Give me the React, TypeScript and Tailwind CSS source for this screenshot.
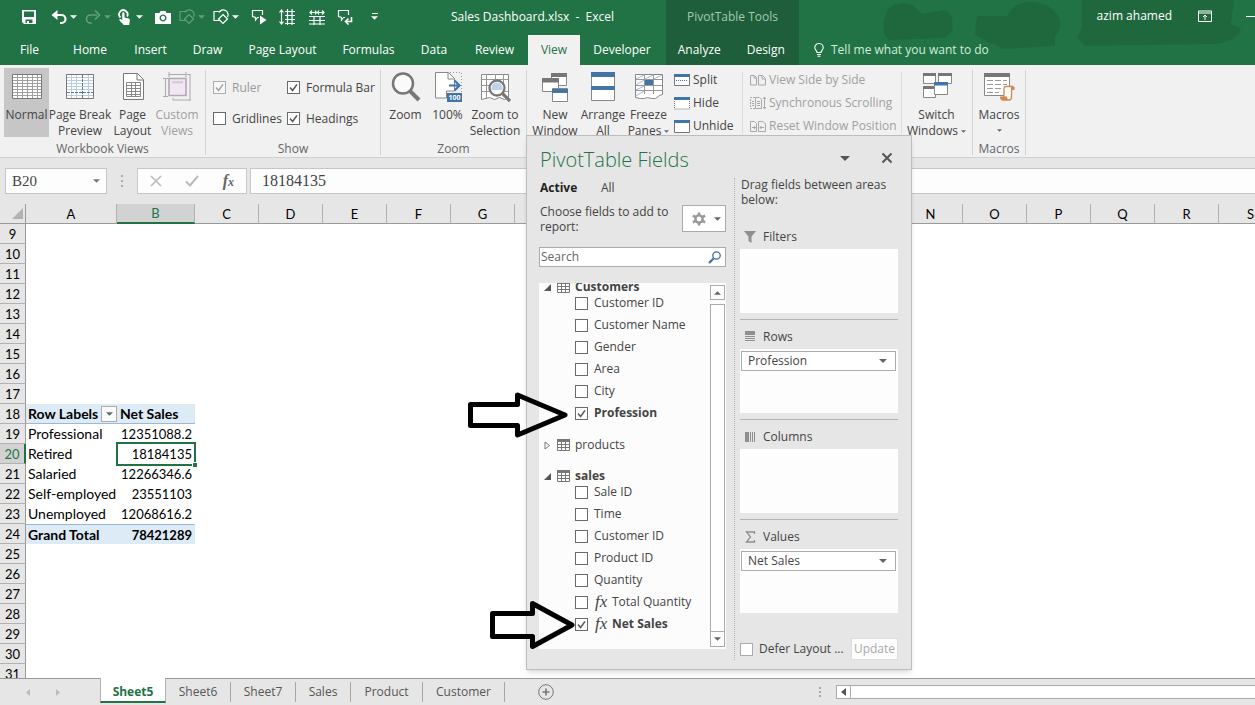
import { useState } from "react";
import type { ReactNode } from "react";
import clsx from "clsx";

/* ---------- shared pieces ---------- */

function Caret({ className }: { className?: string }) {
  return (
    <svg viewBox="0 0 8 4" className={clsx("h-1 w-2 shrink-0", className)} fill="currentColor" aria-hidden="true">
      <path d="M0 0h8L4 4z" />
    </svg>
  );
}

function CheckBox({
  id,
  label,
  defaultChecked,
  disabled,
  fx,
  boldWhenChecked,
  tone = "border-[#6a6a6a]",
}: {
  id: string;
  label: string;
  defaultChecked?: boolean;
  disabled?: boolean;
  fx?: boolean;
  boldWhenChecked?: boolean;
  tone?: string;
}) {
  const [on, setOn] = useState(!!defaultChecked);
  return (
    <div className={clsx("flex items-center", disabled && "opacity-50")}>
      <span className="grid h-[13px] w-[13px] shrink-0">
        <input
          id={id}
          type="checkbox"
          checked={on}
          disabled={disabled}
          onChange={() => setOn(!on)}
          className={clsx("col-start-1 row-start-1 h-[13px] w-[13px] appearance-none border bg-white", tone)}
        />
        {on && (
          <svg viewBox="0 0 13 13" className="pointer-events-none col-start-1 row-start-1 h-[13px] w-[13px]" aria-hidden="true">
            <path d="M3 6.5l2.6 3L10 3.4" fill="none" stroke="#5a5a5a" strokeWidth="1.6" />
          </svg>
        )}
      </span>
      {fx && <span className="ml-[7px] w-[11px] font-['Liberation_Serif',serif] text-[17px] leading-4 italic">fx</span>}
      <label htmlFor={id} className={clsx("ml-1.5 whitespace-nowrap", boldWhenChecked && on && "font-bold")}>
        {label}
      </label>
    </div>
  );
}

/* ---------- quick access icons ---------- */

const line = { fill: "none", stroke: "currentColor", strokeWidth: 1.2 };

const SaveIcon = (
  <path fillRule="evenodd" fill="currentColor" d="M1 1h14v14H3l-2-2zM3 2.5V8h10V2.5zM4.5 10.500V14H6v-2h2v2h3.500v-3.500z" />
);
const UndoIcon = (
  <g>
    <path d="M4 6h6.500a4 4 0 0 1 0 8H9" fill="none" stroke="currentColor" strokeWidth="2.200" />
    <path d="M0.500 6L6.500 1v10z" fill="currentColor" />
  </g>
);
const RedoIcon = (
  <g>
    <path d="M12 6H5.500a4 4 0 0 0 0 8H7" fill="none" stroke="currentColor" strokeWidth="1.600" />
    <path d="M10 1.500L14.500 6 10 10.500" fill="none" stroke="currentColor" strokeWidth="1.600" />
  </g>
);
const TouchIcon = (
  <g>
    <path d="M3.500 8.500a4.200 4.200 0 1 1 6.500-1" fill="none" stroke="currentColor" strokeWidth="1.800" />
    <path d="M5.200 4.500c0-1.600 2.300-1.600 2.300 0v4l3.800.9c1.200.3 1.700 1 1.500 2.100L12.200 16H6.800L2.500 11.500c-.6-1 .6-1.800 1.500-1.200l1.200.8z" fill="currentColor" />
  </g>
);
const CameraIcon = (
  <path fillRule="evenodd" fill="currentColor" d="M0 4h4.500L5.500 2h5l1 2H16v11H0zM8 5.500a3.500 3.500 0 1 0 .01 0zM8 6.800a2.200 2.200 0 1 1-.01 0z" />
);
const ShapesIcon = (
  <g {...line}>
    <path d="M7 11.500H1v-9h7M6 3.500a4.500 4.500 0 0 1 8.500 4.500" />
    <path d="M10 5.500l4.500 4.500-4.500 4.500L5.500 10z" />
  </g>
);
const CommentPlayIcon = (
  <g>
    <path {...line} d="M8 8.500H6.500L4.500 11V8.500L1.500 7.500v-6h10V6" />
    <path d="M9 6.500l6.500 4.500L9 15.500z" fill="currentColor" />
  </g>
);
const RowHeightIcon = (
  <g {...line}>
    <path d="M2.500 1v14M.5 3.500l2-2.500 2 2.500M.5 12.500l2 2.500 2-2.500M6 2.500h10M6 6.500h10M6 10.500h10M6 14.500h10M8.500 0v16M13 0v16" />
  </g>
);
const ColumnWidthIcon = (
  <g {...line}>
    <path d="M1 3.500h6M9 3.500h6M3 1.500l-2 2 2 2M6 1.500l1.500 2-1.500 2M10 1.500L8.500 3.500l1.500 2M13 1.500l2 2-2 2M0 7.500h16M0 11.500h16M0 15h16M5 7v9M11 7v9" />
  </g>
);
const CommentReturnIcon = (
  <g {...line}>
    <path d="M8 8.500H6.500L4.500 11V8.500L1.500 7.500v-6h10V6" />
    <path d="M14.500 8v4.500H9M11.500 9.500l-3 3 3 3" strokeWidth="1.600" />
  </g>
);

const quickItems: { name: string; icon: ReactNode; caret?: boolean; space: string; dim?: boolean }[] = [
  { name: "Save", icon: SaveIcon, space: "ml-[21px]" },
  { name: "Undo", icon: UndoIcon, caret: true, space: "ml-3.5" },
  { name: "Redo", icon: RedoIcon, caret: true, space: "ml-2", dim: true },
  { name: "Touch mode", icon: TouchIcon, caret: true, space: "ml-1.5" },
  { name: "Camera", icon: CameraIcon, space: "ml-3" },
  { name: "Combine shapes", icon: ShapesIcon, caret: true, space: "ml-2", dim: true },
  { name: "Shapes", icon: ShapesIcon, caret: true, space: "ml-2" },
  { name: "Show comment", icon: CommentPlayIcon, space: "ml-3" },
  { name: "Row height", icon: RowHeightIcon, space: "ml-3" },
  { name: "Column width", icon: ColumnWidthIcon, space: "ml-3.5" },
  { name: "Reply comment", icon: CommentReturnIcon, space: "ml-3" },
];

const tabs: [string, string][] = [
  ["File", "w-[59px]"],
  ["Home", "w-[62px]"],
  ["Insert", "w-[59px]"],
  ["Draw", "w-[55px]"],
  ["Page Layout", "w-[95px]"],
  ["Formulas", "w-[77px]"],
  ["Data", "w-[54px]"],
  ["Review", "w-[67px]"],
  ["View", "w-[52px]"],
  ["Developer", "w-[84px]"],
];

function Header() {
  return (
    <header className="flex h-[65px] shrink-0 bg-[#217346] text-white">
      <div className="flex w-[666px] shrink-0 flex-col">
        <div className="flex h-[35px] items-center pb-0.5">
          {quickItems.map((q) => (
            <button key={q.name} aria-label={q.name} className={clsx("flex items-center gap-[3px]", q.space, q.dim && "opacity-30")}>
              <svg viewBox="0 0 16 16" className="h-4 w-4">{q.icon}</svg>
              {q.caret && <Caret className="w-[7px]" />}
            </button>
          ))}
          <button aria-label="Customize toolbar" className="ml-[18px] flex flex-col items-center gap-0.5">
            <span className="h-px w-1.5 bg-white" />
            <Caret className="w-[7px]" />
          </button>
          <h1 className="ml-[73px] whitespace-pre">Sales Dashboard.xlsx  -  Excel</h1>
        </div>
        <nav className="flex h-[30px]">
          {tabs.map(([t, w]) => (
            <button key={t} className={clsx("text-center", w, t === "View" && "bg-[#f1f1f1] text-[#217346]")}>
              {t}
            </button>
          ))}
        </nav>
      </div>
      <div className="flex w-[133px] shrink-0 flex-col bg-[#1e5e3a]">
        <div className="flex h-[35px] items-center justify-center pb-0.5 text-[#a3c9b2]">PivotTable Tools</div>
        <nav className="flex h-[30px]">
          <button className="w-[67px]">Analyze</button>
          <button className="w-[67px]">Design</button>
        </nav>
      </div>
      <div className="grid min-w-0 flex-1">
        <svg viewBox="0 0 456 65" preserveAspectRatio="xMaxYMin slice" className="col-start-1 row-start-1 h-[65px] w-full" aria-hidden="true">
          <g fill="#1f683e">
            <path d="M87 14c2-10 18-14 28-8l8 8 22-4c8 2 10 12 8 22l-8 6-54 2c-8-4-8-16-4-26z" />
            <path d="M178 16h30C216-2 242-2 254 10c10 8 8 20 2 26v10l-52 3c-10-6-26-10-28-16z" />
            <path d="M283 0h152l-3 24 10 4c-2 10-14 16-32 16l-124 2-8-8 5-10z" />
          </g>
        </svg>
        <div className="col-start-1 row-start-1 flex flex-col">
          <div className="flex h-[35px] items-center justify-end pb-[3px]">
            <span>azim ahamed</span>
            <button aria-label="Ribbon display options" className="ml-[26px]">
              <svg viewBox="0 0 14 12" className="h-3 w-3.5" fill="none" stroke="currentColor">
                <path d="M.5 1h13v10.500H.500zM.5 3h13M7 10V5M5 7l2-2 2 2" />
              </svg>
            </button>
            <button aria-label="Minimize" className="ml-[34px] h-px w-[9px] bg-white" />
          </div>
          <div className="flex h-[30px] items-center">
            <svg viewBox="0 0 10 14" className="ml-[15px] h-3.5 w-2.5" fill="none" stroke="currentColor" strokeWidth="1.100" aria-hidden="true">
              <path d="M3 9.500C3 7.500.8 7 .8 4.500a4.200 4 0 0 1 8.400 0C9.200 7 7 7.500 7 9.500zM3 11.500h4M3.500 13.300h3" />
            </svg>
            <button className="ml-[7px] text-[#d3ebdd]">Tell me what you want to do</button>
          </div>
        </div>
      </div>
    </header>
  );
}

/* ---------- ribbon icons ---------- */

const NormalIcon = (
  <g>
    <path d="M1.500 3.500h29v24h-29z" fill="#fff" stroke="#777" />
    <path d="M6.500 4v23M11.500 4v23M16.500 4v23M21.500 4v23M26.500 4v23M2 6.500h28M2 9.500h28M2 12.500h28M2 15.500h28M2 18.500h28M2 21.500h28M2 24.500h28" stroke="#a0a0a0" />
  </g>
);
const PageBreakIcon = (
  <g fill="none">
    <path d="M2.500 3.500h27v24h-27z" fill="#fff" stroke="#777" />
    <path d="M7.500 4v23M12.500 4v23M24.500 4v23M3 6.500h26M3 9.500h26M3 12.500h26M3 15.500h26M3 18.500h26M3 24.500h26" stroke="#b6cfe2" />
    <path d="M18.500 4v23M3 21.500h26" stroke="#5b7898" strokeDasharray="3 1" />
  </g>
);
const PageLayoutIcon = (
  <g fill="none" stroke="#777">
    <path d="M6.500 2.500h14l6 6v20h-20z" fill="#fff" />
    <path d="M20 2.500v6.500h6.500" />
    <path d="M9.500 11.500h14v14h-14zM14.500 11.500v14M18.500 11.500v14M9.500 14.500h14M9.500 17.500h14M9.500 20.500h14M9.500 23.500h14" stroke="#888" />
  </g>
);
const CustomViewsIcon = (
  <g fill="none" stroke="#aaa">
    <path d="M8 7.500h17v17H8z" fill="#f0e8f0" stroke="#b6a6b6" strokeWidth="1.600" />
    <path d="M11 10h11v2.500H11z" fill="#dccadd" stroke="none" />
    <path d="M8 3.500h17M8 1v5M25 1v5M4.500 8v17M2 7.500h5M2 25.500h5M29 3.500v26M12 29h18M12 29v-2M26 3.500h3.500" />
  </g>
);
const ZoomIcon = (
  <g fill="none">
    <circle cx="13" cy="12.500" r="10" fill="#fafafa" stroke="#777" strokeWidth="2.500" />
    <path d="M20 20l9 9" stroke="#777" strokeWidth="4" />
  </g>
);
const HundredIcon = (
  <g fill="none">
    <path d="M3.500 1.500h13l6 6V20h-8v7h-11z" fill="#fff" stroke="#888" />
    <path d="M16 1.500v6.500h6" stroke="#888" />
    <path d="M18 1.500h11.500V24" stroke="#999" strokeDasharray="1 2" />
    <path d="M17 14.500h10M22.500 9.500l5 5-5 5" stroke="#3f77b5" strokeWidth="2.200" />
    <path d="M15 22h15v9H15z" fill="#4374a8" />
    <text x="22.500" y="29.300" fontSize="7" fontWeight="700" fill="#fff" textAnchor="middle">100</text>
  </g>
);
const ZoomSelIcon = (
  <g fill="none">
    <path d="M2.500 3.500h27v23l-4 2-5-2-5 2-5-2-8 2z" fill="#fff" stroke="#888" />
    <path d="M7.500 3v24M16.500 3v5M24.500 3v10M3 8.500h26M3 14.500h7M3 20.500h8M24 20.500h5" stroke="#999" />
    <circle cx="18" cy="17" r="7.500" fill="#fff" stroke="#777" strokeWidth="2.300" />
    <path d="M12.500 17a5.500 5.500 0 0 1 11 0v2h-11z" fill="#bcd3ea" />
    <path d="M23.500 22.500l7.500 7.500" stroke="#777" strokeWidth="3.200" />
  </g>
);
const NewWindowIcon = (
  <g fill="#fff" stroke="#888">
    <path d="M12.500 2.500h15v12h-15z" />
    <path d="M12 2h16v4H12z" fill="#777" stroke="none" />
    <path d="M3.500 7.500h16v13h-16z" />
    <path d="M3 7h17v4.500H3z" fill="#777" stroke="none" />
    <path d="M13.500 17.500h15v13h-15z" />
    <path d="M13 18h16v4H13z" fill="#4374a8" stroke="none" />
  </g>
);
const ArrangeIcon = (
  <g fill="#fff" stroke="#888">
    <path d="M4.500 1.500h23v28h-23z" />
    <path d="M4 1h24v5H4zM4 15h24v4H4z" fill="#4374a8" stroke="none" />
  </g>
);
const FreezeIcon = (
  <g fill="none">
    <path d="M2.500 3.500h27v20l-3 1-4 3h-4l-4-1-3 1-4 0-5-1z" fill="#fff" stroke="#888" />
    <path d="M11.500 3v20M20.500 3v20M3 8.500h26M3 14.500h26M3 19.500h26" stroke="#999" />
    <path d="M3 8l8-4M12 8l8-4M21 8l8-4M3 14l8-5M3 19l8-4M3 25l8-5" stroke="#9db8cf" />
    <path d="M12 9h8v5h-8z" fill="#4374a8" />
  </g>
);
const SwitchIcon = (
  <g fill="#fff" stroke="#888">
    <path d="M2.500 3.500h12v9h-12zM17.500 3.500h13v9h-13zM2.500 16.500h12v10h-12z" />
    <path d="M2 2h13v3H2zM17 2h14v3H17zM2 15h13v3H2z" fill="#777" stroke="none" />
    <path d="M13.500 11.500h13v12h-13z" />
    <path d="M13 11h14v3.500H13z" fill="#4374a8" stroke="none" />
  </g>
);
const MacrosIcon = (
  <g fill="none">
    <path d="M1.500 3.500h25v21h-25z" fill="#fff" stroke="#888" />
    <path d="M1 2h26v4H1z" fill="#777" />
    <path d="M4 9.500h6M12 9.500h6M20 9.500h4M4 13.500h6M12 13.500h6M20 13.500h4M4 17.500h6M12 17.500h6M4 21.500h6M12 21.500h4" stroke="#999" />
    <path d="M21 17c0-1 1-1.500 2-1.500h7.500c-1.500 0-2 1-2 2V26c0 2-1 3-2.500 3h-6c1-1 1-2 1-3z" fill="#fff" stroke="#d0884c" strokeWidth="1.300" />
    <path d="M17 25.500h7c0 2 1 3.500 2 3.500h-7c-1.500 0-2-1.500-2-3.500zM28.500 16h3v3h-3z" fill="#d0884c" />
  </g>
);

function BigButton({
  icon,
  lines,
  width,
  active,
  disabled,
  caret,
}: {
  icon: ReactNode;
  lines: string[];
  width: string;
  active?: boolean;
  disabled?: boolean;
  caret?: boolean;
}) {
  return (
    <button
      disabled={disabled}
      className={clsx("flex h-[69px] flex-col items-center pt-[3px]", width, active && "bg-[#c6c6c6]", disabled && "text-[#a0a0a0]")}
    >
      <svg viewBox="0 0 32 32" className="h-8 w-8 shrink-0" aria-hidden="true">{icon}</svg>
      <span className="mt-1 flex flex-col items-center leading-4">
        {lines.map((l, i) => (
          <span key={l} className="flex items-center gap-[3px] whitespace-nowrap">
            {l}
            {caret && i === lines.length - 1 && lines.length > 1 && <Caret className="h-[3px] w-[5px] text-[#666]" />}
          </span>
        ))}
        {caret && lines.length === 1 && <Caret className="mt-1.5 h-[3px] w-[5px] text-[#666]" />}
      </span>
    </button>
  );
}

function SmallButton({ icon, label, disabled }: { icon: ReactNode; label: string; disabled?: boolean }) {
  return (
    <button disabled={disabled} className={clsx("flex h-[23px] items-center gap-[3px] whitespace-nowrap", disabled && "text-[#a0a0a0]")}>
      <svg viewBox="0 0 16 14" className="h-3.5 w-4" aria-hidden="true">{icon}</svg>
      {label}
    </button>
  );
}

function Group({ label, width, children }: { label?: string; width: string; children: ReactNode }) {
  return (
    <section className={clsx("flex shrink-0 flex-col", width)}>
      <div className="flex h-[74px]">{children}</div>
      <div className="text-center leading-4 text-[#666]">{label}</div>
    </section>
  );
}

const Divider = () => <span className="mt-0.5 h-[85px] w-px shrink-0 bg-[#d2d2d2]" />;

const splitIcon = (
  <g fill="none">
    <path d="M.5 1.500h15v11H.500z" fill="#fff" stroke="#777" />
    <path d="M0 1h16v3H0z" fill="#4374a8" />
    <path d="M2 7.500h12" stroke="#4374a8" strokeDasharray="1 1" />
  </g>
);
const hideIcon = (
  <g fill="none">
    <path d="M.5 3v10h15V3" fill="#fff" stroke="#777" strokeDasharray="1 1" />
    <path d="M0 1h16v3H0z" fill="#4374a8" />
  </g>
);
const unhideIcon = (
  <g fill="none">
    <path d="M.5 1.500h15v12H.500z" fill="#fff" stroke="#777" />
    <path d="M0 1h16v3H0z" fill="#4374a8" />
  </g>
);
const sideIcon = <path d="M.5 2.500h4l2 2v7.500h-6zM8.500 2.500h4l3 3V12h-7zM12 2.500V6h3M4 2.500V5h2.500" fill="none" stroke="#a8a8a8" />;
const syncIcon = (
  <g fill="none" stroke="#a8a8a8">
    <path d="M5 1.500H.500v11H5" strokeDasharray="2 1" />
    <path d="M5.500 1.500h4l2 2v9h-6zM7 5.500h3M7 7.500h3M7 9.500h3M2 5.500h2M2 7.500h2M2 9.500h2M14.500 1v12M13 3l1.500-2L16 3M13 11l1.500 2 1.500-2" />
  </g>
);
const resetIcon = (
  <path d="M.5 2.500h4l2 2v8h-6zM8.500 2.500h4l3 2v8h-7zM2 8.500h3.500M4 7l1.500 1.500L4 10M14 8.500h-4M11.500 7L10 8.500l1.500 1.500" fill="none" stroke="#a8a8a8" />
);

function Ribbon() {
  return (
    <div className="flex h-[93px] shrink-0 overflow-hidden border-b border-[#d0d0d0] bg-[#f1f1f1] pt-[3px] text-[#444]">
      <Group label="Workbook Views" width="w-[205px]">
        <span className="w-1" />
        <BigButton icon={NormalIcon} lines={["Normal"]} width="w-[45px]" active />
        <BigButton icon={PageBreakIcon} lines={["Page Break", "Preview"]} width="w-[62px]" />
        <BigButton icon={PageLayoutIcon} lines={["Page", "Layout"]} width="w-[43px]" />
        <BigButton icon={CustomViewsIcon} lines={["Custom", "Views"]} width="w-[46px]" disabled />
      </Group>
      <Divider />
      <Group label="Show" width="w-[174px]">
        <div className="grid h-[66px] grid-cols-[74px_1fr] grid-rows-[31px_31px] pt-1 pl-[7px]">
          <CheckBox id="ruler" label="Ruler" defaultChecked disabled />
          <CheckBox id="formula-bar" label="Formula Bar" defaultChecked />
          <CheckBox id="gridlines" label="Gridlines" />
          <CheckBox id="headings" label="Headings" defaultChecked />
        </div>
      </Group>
      <Divider />
      <Group label="Zoom" width="w-[145px]">
        <span className="w-1" />
        <BigButton icon={ZoomIcon} lines={["Zoom"]} width="w-[41px]" />
        <BigButton icon={HundredIcon} lines={["100%"]} width="w-[43px]" />
        <BigButton icon={ZoomSelIcon} lines={["Zoom to", "Selection"]} width="w-[52px]" />
      </Group>
      <Divider />
      <Group width="w-[445px]">
        <span className="w-1" />
        <BigButton icon={NewWindowIcon} lines={["New", "Window"]} width="w-[48px]" />
        <BigButton icon={ArrangeIcon} lines={["Arrange", "All"]} width="w-[48px]" />
        <BigButton icon={FreezeIcon} lines={["Freeze", "Panes"]} width="w-[43px]" caret />
        <div className="ml-1 flex w-[68px] flex-col">
          <SmallButton icon={splitIcon} label="Split" />
          <SmallButton icon={hideIcon} label="Hide" />
          <SmallButton icon={unhideIcon} label="Unhide" />
        </div>
        <span className="mt-1 h-[62px] w-px bg-[#dcdcdc]" />
        <div className="ml-[7px] flex w-[151px] flex-col">
          <SmallButton icon={sideIcon} label="View Side by Side" disabled />
          <SmallButton icon={syncIcon} label="Synchronous Scrolling" disabled />
          <SmallButton icon={resetIcon} label="Reset Window Position" disabled />
        </div>
        <span className="mt-1 h-[62px] w-px bg-[#dcdcdc]" />
        <BigButton icon={SwitchIcon} lines={["Switch", "Windows"]} width="w-[69px]" caret />
      </Group>
      <Divider />
      <Group label="Macros" width="w-[52px]">
        <BigButton icon={MacrosIcon} lines={["Macros"]} width="w-[52px]" caret />
      </Group>
      <Divider />
    </div>
  );
}

function FormulaBar() {
  return (
    <div className="flex h-[46px] shrink-0 items-center bg-[#e6e6e6] pl-[5px] font-['Liberation_Serif',serif] text-[#444]">
      <div className="flex h-[26px] w-[102px] items-center border border-[#c6c6c6] bg-[#fdfdfd] pr-1.5 pl-1.5">
        <input aria-label="Name box" defaultValue="B20" className="min-w-0 flex-1 bg-transparent text-[15px] outline-none" />
        <Caret className="w-[7px] text-[#777]" />
      </div>
      <svg viewBox="0 0 2 12" className="mx-[14px] h-3 w-0.5" fill="#aaa" aria-hidden="true">
        <path d="M0 0h2v2H0zM0 5h2v2H0zM0 10h2v2H0z" />
      </svg>
      <div className="flex h-[26px] w-[110px] items-center justify-between border border-[#c6c6c6] bg-[#fdfdfd] px-3">
        <button aria-label="Cancel">
          <svg viewBox="0 0 12 12" className="h-3 w-3" fill="none" stroke="#bbb" strokeWidth="1.600"><path d="M1 1l10 10M11 1L1 11" /></svg>
        </button>
        <button aria-label="Enter">
          <svg viewBox="0 0 14 12" className="h-3 w-3.5" fill="none" stroke="#bbb" strokeWidth="2"><path d="M1 6.500l4 4L13 1" /></svg>
        </button>
        <button className="text-[16px] leading-5 font-bold text-[#666] italic">
          f<span className="text-[12px]">x</span>
        </button>
      </div>
      <input
        aria-label="Formula"
        defaultValue="18184135"
        className="ml-[3px] h-[26px] min-w-0 flex-1 border border-r-0 border-[#c6c6c6] bg-[#fdfdfd] pl-[11px] text-base outline-none"
      />
    </div>
  );
}

/* ---------- grid ---------- */

const columns = Array.from({ length: 19 }, (_, i) => String.fromCharCode(65 + i));
const rowNumbers = Array.from({ length: 23 }, (_, i) => i + 9);
const pivot: Record<number, [string, string]> = {
  18: ["Row Labels", "Net Sales"],
  19: ["Professional", "12351088.2"],
  20: ["Retired", "18184135"],
  21: ["Salaried", "12266346.6"],
  22: ["Self-employed", "23551103"],
  23: ["Unemployed", "12068616.2"],
  24: ["Grand Total", "78421289"],
};

function Sheet() {
  return (
    <main className="min-h-0 flex-1 overflow-hidden bg-white">
      <table className="w-[1283px] table-fixed border-separate border-spacing-0 font-[Lato,sans-serif] text-[13px] text-black">
        <colgroup>
          <col className="w-[26px]" />
          <col className="w-[91px]" />
          <col className="w-[78px]" />
          {columns.slice(2).map((c) => (
            <col key={c} className="w-16" />
          ))}
        </colgroup>
        <thead>
          <tr className="h-5 bg-[#e6e6e6]">
            <th className="border-r border-b border-[#9a9a9a] p-0">
              <svg viewBox="0 0 12 12" className="ml-auto h-3 w-3.5" aria-label="Select all"><path d="M11 0v11H0z" fill="#b2b2b2" /></svg>
            </th>
            {columns.map((c) => (
              <th
                key={c}
                className={clsx(
                  "h-5 border-r border-r-[#b1b1b1] p-0 font-normal leading-4",
                  c === "B" ? "border-b-2 border-b-[#217346] bg-[#d2d2d2] text-[#217346]" : "border-b border-b-[#9a9a9a]"
                )}
              >
                {c}
              </th>
            ))}
          </tr>
        </thead>
        <tbody>
          {rowNumbers.map((n) => {
            const data = pivot[n];
            const strong = n === 18 || n === 24;
            const band = clsx(strong && "bg-[#ddebf7] font-bold", n === 18 && "border-b border-[#9bb9d6]", n === 24 && "border-t border-[#9bb9d6]");
            return (
              <tr key={n} className="h-5">
                <th
                  scope="row"
                  className={clsx(
                    "h-5 border-b border-b-[#b1b1b1] p-0 text-center leading-[18px] font-normal",
                    n === 20 ? "border-r-2 border-r-[#217346] bg-[#d2d2d2] text-[#217346]" : "border-r border-r-[#9a9a9a] bg-[#e6e6e6]"
                  )}
                >
                  {n}
                </th>
                {data ? (
                  <>
                    <td className={clsx("h-5 p-0 pl-0.5 text-[14px]", band)}>
                      <div className="flex h-[18px] items-center justify-between overflow-hidden whitespace-nowrap">
                        <span>{data[0]}</span>
                        {n === 18 && (
                          <button aria-label="Filter row labels" className="flex h-4 w-4 shrink-0 items-center justify-center border border-[#aaa] bg-[#fbfbfb] text-[#666]">
                            <Caret className="w-[7px]" />
                          </button>
                        )}
                      </div>
                    </td>
                    <td className={clsx("relative h-5 p-0 pr-[3px] pl-[3px] leading-[18px]", n === 18 ? "text-left text-[14px]" : "text-right", band)}>
                      {data[1]}
                      {n === 20 && (
                        <span className="absolute -inset-x-px -top-0.5 -bottom-0.5 border-2 border-[#217346]">
                          <span className="absolute -right-[3px] -bottom-[3px] h-[5px] w-[5px] border-t border-l border-white bg-[#217346]" />
                        </span>
                      )}
                    </td>
                    <td colSpan={17} className="p-0" />
                  </>
                ) : (
                  <td colSpan={19} className="p-0" />
                )}
              </tr>
            );
          })}
        </tbody>
      </table>
    </main>
  );
}

function SheetTabs() {
  const items: [string, string][] = [
    ["Sheet6", "w-[65px]"],
    ["Sheet7", "w-[65px]"],
    ["Sales", "w-[55px]"],
    ["Product", "w-[72px]"],
    ["Customer", "w-[82px]"],
  ];
  return (
    <footer className="flex h-[27px] shrink-0 border-t border-[#9a9a9a] bg-[#e6e6e6] text-[#555]">
      <div className="flex w-[100px] shrink-0 items-center text-[#bbb]">
        <button aria-label="Previous sheets" className="ml-[26px]">
          <svg viewBox="0 0 4 7" className="h-[7px] w-1" fill="currentColor"><path d="M4 0v7L0 3.500z" /></svg>
        </button>
        <button aria-label="Next sheets" className="ml-[26px]">
          <svg viewBox="0 0 4 7" className="h-[7px] w-1" fill="currentColor"><path d="M0 0v7l4-3.500z" /></svg>
        </button>
      </div>
      <button className="-mt-px mb-[2px] w-[66px] border-x border-b-2 border-x-[#b1b1b1] border-b-[#217346] bg-white pt-1 font-bold text-[#217346]">Sheet5</button>
      {items.map(([t, w]) => (
        <button key={t} className={clsx("my-[3px] border-r border-[#a6a6a6]", w)}>
          {t}
        </button>
      ))}
      <button aria-label="New sheet" className="ml-[33px]">
        <svg viewBox="0 0 16 16" className="h-4 w-4" fill="none" stroke="#777">
          <circle cx="8" cy="8" r="7.300" />
          <path d="M8 4.500v7M4.500 8h7" strokeWidth="1.600" />
        </svg>
      </button>
      <div className="ml-auto flex w-[436px] items-center">
        <svg viewBox="0 0 2 10" className="h-2.5 w-0.5" fill="#aaa" aria-hidden="true">
          <path d="M0 0h2v2H0zM0 4h2v2H0zM0 8h2v2H0z" />
        </svg>
        <button aria-label="Scroll left" className="ml-[15px] flex h-3.5 w-[15px] items-center justify-center border border-[#aaa] bg-white text-[#555]">
          <svg viewBox="0 0 5 8" className="h-2 w-[5px]" fill="currentColor"><path d="M5 0v8L0 4z" /></svg>
        </button>
        <span className="h-3.5 flex-1 border-y border-[#aaa] bg-white" />
      </div>
    </footer>
  );
}

/* ---------- PivotTable pane ---------- */

function TableNode({ name, open, bold, children }: { name: string; open?: boolean; bold?: boolean; children?: ReactNode }) {
  return (
    <li className="mt-[11px] first:-mt-1.5">
      <div className={clsx("flex h-5 items-center pl-[5px]", open && "-mb-[5px]")}>
        <svg viewBox="0 0 7 9" className="h-[9px] w-[7px]" aria-hidden="true">
          {open ? <path d="M7 1v7H0z" fill="#555" /> : <path d="M1 1l4.500 3.500L1 8z" fill="none" stroke="#777" />}
        </svg>
        <svg viewBox="0 0 13 12" className="ml-1.5 h-3 w-[13px]" fill="none" stroke="#777" aria-hidden="true">
          <path d="M.5.5h12v11H.500zM1 5.500h11M1 8.500h11M4.500 3v8M8.500 3v8" fill="#fff" />
          <path d="M0 1.500h13" strokeWidth="3" />
        </svg>
        <span className={clsx("ml-[5px]", bold && "font-bold")}>{name}</span>
      </div>
      <ul>{children}</ul>
    </li>
  );
}

function Field({ id, label, checked, fx }: { id: string; label: string; checked?: boolean; fx?: boolean }) {
  return (
    <li className="flex h-[22px] items-center pl-9">
      <CheckBox id={id} label={label} defaultChecked={checked} fx={fx} boldWhenChecked />
    </li>
  );
}

function Area({ icon, label, value, last }: { icon: ReactNode; label: string; value?: string; last?: boolean }) {
  return (
    <div className={clsx(!last && "mb-[5px] border-b border-[#b4b4b4] pb-1.5")}>
      <div className="flex h-6 items-center pl-1">
        <svg viewBox="0 0 12 12" className="h-3 w-3" aria-hidden="true">{icon}</svg>
        <span className="ml-[7px]">{label}</span>
      </div>
      <div className="h-16 bg-[#fdfdfd] p-0.5 pl-px">
        {value && (
          <button className="flex h-5 w-full items-center justify-between border border-[#ababab] bg-white pr-2 pl-1.5">
            {value}
            <Caret className="text-[#666]" />
          </button>
        )}
      </div>
    </div>
  );
}

function PivotPane() {
  return (
    <aside className="absolute top-[135px] left-[526px] flex h-[535px] w-[386px] flex-col border border-[#bdbdbd] bg-[#e6e6e6] pl-3 text-[#444] shadow-md">
      <div className="flex h-[42px] shrink-0 items-center pt-1.5 pr-[18px]">
        <h2 className="flex-1 pl-px text-[20px] font-light text-[#217346]">PivotTable Fields</h2>
        <button aria-label="Pane options" className="mr-[31px] mb-1 text-[#555]">
          <Caret className="h-[5px] w-[10px]" />
        </button>
        <button aria-label="Close pane" className="mb-1">
          <svg viewBox="0 0 12 12" className="h-3 w-3" fill="none" stroke="#555" strokeWidth="2"><path d="M1.500 1.500l9 9M10.500 1.500l-9 9" /></svg>
        </button>
      </div>
      <div className="flex min-h-0 flex-1 pb-[9px]">
        <div className="flex w-[187px] flex-col">
          <div className="flex h-5 items-center pl-px">
            <button className="w-[61px] text-left font-bold text-[#222]">Active</button>
            <button>All</button>
          </div>
          <div className="mt-1.5 flex h-[34px] items-start justify-between pl-px">
            <p className="w-[136px] leading-[15px] whitespace-nowrap">
              Choose fields to add to
              <br />
              report:
            </p>
            <button aria-label="Tools" className="mt-px flex h-[27px] w-11 items-center justify-between border border-[#ababab] bg-white pr-1 pl-[9px] text-[#666]">
              <svg viewBox="0 0 14 14" className="h-3.5 w-3.5" fill="none" stroke="#999" aria-hidden="true">
                <circle cx="7" cy="7" r="3.600" strokeWidth="2.400" />
                <path d="M7 .5v2.500M7 11v2.500M.9 3.700L3.300 5M10.700 9l2.400 1.300M.9 10.300L3.300 9M10.700 5l2.400-1.300" strokeWidth="2.600" />
              </svg>
              <Caret className="w-[7px]" />
            </button>
          </div>
          <div className="mt-[9px] flex h-5 shrink-0 items-center border border-[#ababab] bg-white pr-1">
            <input aria-label="Search fields" placeholder="Search" className="min-w-0 flex-1 pl-px outline-none placeholder:text-[#666]" />
            <svg viewBox="0 0 13 13" className="h-[13px] w-[13px]" fill="none" stroke="#3b6ea5" aria-hidden="true">
              <circle cx="8.500" cy="4.500" r="3.700" strokeWidth="1.300" />
              <path d="M5.500 7.500L1 12" strokeWidth="2.200" />
            </svg>
          </div>
          <div className="mt-4 mb-[11px] flex min-h-0 flex-1 overflow-hidden bg-[#fcfcfc]">
            <ul className="min-w-0 flex-1">
              <TableNode name="Customers" open bold>
                <Field id="c-id" label="Customer ID" />
                <Field id="c-name" label="Customer Name" />
                <Field id="c-gender" label="Gender" />
                <Field id="c-area" label="Area" />
                <Field id="c-city" label="City" />
                <Field id="c-prof" label="Profession" checked />
              </TableNode>
              <TableNode name="products" />
              <TableNode name="sales" open bold>
                <Field id="s-id" label="Sale ID" />
                <Field id="s-time" label="Time" />
                <Field id="s-cust" label="Customer ID" />
                <Field id="s-prod" label="Product ID" />
                <Field id="s-qty" label="Quantity" />
                <Field id="s-total" label="Total Quantity" fx />
                <Field id="s-net" label="Net Sales" checked fx />
              </TableNode>
            </ul>
            <div className="mr-px flex w-[15px] flex-col pt-0.5 pb-0.5 text-[#666]">
              <button aria-label="Scroll up" className="flex h-[15px] items-center justify-center border border-[#ababab] bg-white">
                <Caret className="w-[7px] rotate-180" />
              </button>
              <span className="mt-1 flex-1 border border-[#ababab] bg-white" />
              <button aria-label="Scroll down" className="flex h-[15px] items-center justify-center border border-t-0 border-[#ababab] bg-white">
                <Caret className="w-[7px]" />
              </button>
            </div>
          </div>
        </div>
        <div className="ml-2 w-px border-l border-dotted border-[#b0b0b0]" />
        <div className="-mt-px ml-[5px] flex w-[158px] flex-col">
          <p className="mb-[18px] pl-px leading-[15px] whitespace-nowrap">
            Drag fields between areas
            <br />
            below:
          </p>
          <Area icon={<path d="M0 0h12L7.500 5.500V12l-3-2V5.500z" fill="#8f8f8f" />} label="Filters" />
          <Area icon={<path d="M1 0h10v4H1zM1 5h10v1H1zM1 7h10v1H1zM1 9h10v1H1z" fill="#8f8f8f" />} label="Rows" value="Profession" />
          <Area icon={<path d="M1 1h4v10H1zM6 1h1v10H6zM8 1h1v10H8zM10 1h1v10h-1z" fill="#8f8f8f" />} label="Columns" />
          <Area icon={<path d="M10.500 3V1H2.500l4 5-4 5h8V9" fill="none" stroke="#8f8f8f" strokeWidth="1.300" />} label="Values" value="Net Sales" last />
          <div className="mt-auto flex h-[22px] items-center justify-between">
            <CheckBox id="defer" label="Defer Layout ..." tone="border-[#ababab]" />
            <button disabled className="h-[22px] w-[47px] border border-[#ddd] bg-[#fdfdfd] text-[#aaa]">Update</button>
          </div>
        </div>
      </div>
    </aside>
  );
}

/* Hand-drawn pointers laid over the checked fields. */
function Arrows() {
  const stroke = { fill: "none", stroke: "#000", strokeWidth: 5, strokeLinejoin: "round" as const };
  return (
    <>
      <svg viewBox="0 0 102 48" className="pointer-events-none absolute top-[391px] left-[467px] h-12 w-[102px]" aria-hidden="true">
        <path {...stroke} d="M3.500 13.500h47V4L98 24 50.500 44v-9.500h-47z" />
      </svg>
      <svg viewBox="0 0 88 51" className="pointer-events-none absolute top-[600px] left-[489px] h-[51px] w-[88px]" aria-hidden="true">
        <path {...stroke} d="M3.500 13.500h40v-10L83 25 43.500 46.500v-10h-40z" />
      </svg>
    </>
  );
}

export default function App() {
  return (
    <div className="relative flex h-screen flex-col overflow-hidden bg-white font-['Open_Sans',sans-serif] text-[12px] leading-4">
      <Header />
      <Ribbon />
      <FormulaBar />
      <Sheet />
      <SheetTabs />
      <PivotPane />
      <Arrows />
    </div>
  );
}
